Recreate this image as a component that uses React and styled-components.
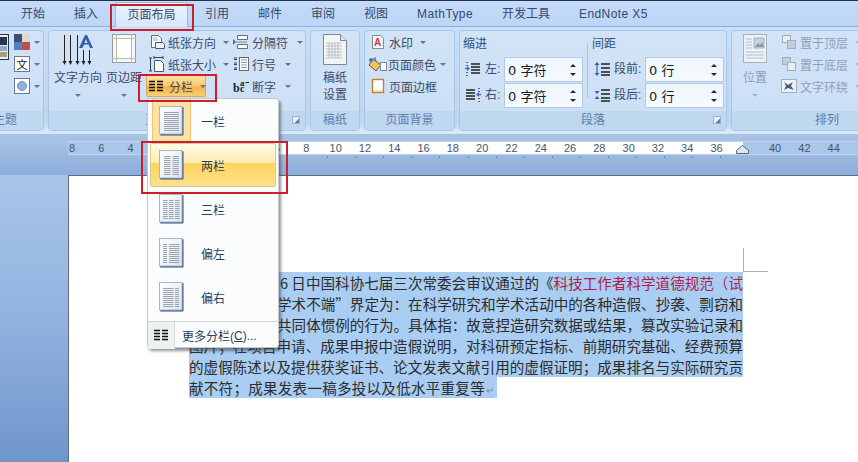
import React from "react";
import styled, { createGlobalStyle } from "styled-components";

const GlobalStyle = createGlobalStyle`
  html, body {
    margin: 0;
    padding: 0;
    background: #fff;
  }
  body {
    font-family: "Liberation Sans", "Noto Sans CJK SC", sans-serif;
    font-size: 12px;
  }
`;

const Window = styled.div`
  position: relative;
  width: 858px;
  height: 462px;
  overflow: hidden;
  display: flex;
  flex-direction: column;
  color: #3a4c66;
`;

/* tabs */
const TabBar = styled.div`
  flex: none;
  height: 27px;
  box-sizing: border-box;
  padding-left: 6.5px;
  display: flex;
  align-items: flex-end;
  background: linear-gradient(#24344a 0, #24344a 1px, #c3dafa 1px, #bdd6f6 100%);
  border-bottom: 1px solid #8fb2dc;
`;
const Tab = styled.div`
  height: ${(p) => (p.$active ? "25px" : "24px")};
  box-sizing: border-box;
  padding: 0 14.5px;
  margin: 0 ${(p) => (p.$active ? "2.5px" : "0")} ${(p) => (p.$active ? "-1px" : "0")};
  line-height: ${(p) => (p.$active ? "25px" : "24px")};
  font-size: 12px;
  letter-spacing: ${(p) => (p.$latin ? "0.4px" : "0")};
  white-space: nowrap;
  color: #35496a;
  border-radius: 3px 3px 0 0;
  ${(p) =>
    p.$active &&
    `
    background: linear-gradient(#eaf3fd, #d6e6f9);
    border: 1px solid #9dbcdc;
    border-bottom: none;
    padding: 0 11.5px;
  `}
`;

/* ribbon */
const Ribbon = styled.div`
  flex: none;
  height: 107px;
  box-sizing: border-box;
  padding: 3px 0 0;
  margin-left: -16px;
  display: flex;
  gap: 4px;
  background: linear-gradient(#c9def6, #bed5f0 90%, #d6e8f8 97%);
`;
const Group = styled.div`
  flex: none;
  width: ${(p) => p.$w}px;
  height: 101px;
  box-sizing: border-box;
  display: flex;
  flex-direction: column;
  border: 1px solid #aac6e6;
  border-radius: 4px;
  background: linear-gradient(#d2e3f7, #cfe1f6 50%, #cadff5);
  overflow: hidden;
`;
const GroupBody = styled.div`
  flex: 1;
  display: flex;
  padding-left: ${(p) => p.$pad || 0}px;
  min-height: 0;
`;
const GroupFooter = styled.div`
  position: relative;
  flex: none;
  height: 19px;
  box-sizing: border-box;
  padding-right: ${(p) => p.$shift || 0}px;
  background: #c0d7f0;
  color: #5d7ea8;
  font-size: 12px;
  line-height: 19px;
  text-align: center;
  white-space: nowrap;
`;
const Launcher = styled.span`
  position: absolute;
  right: 5px;
  top: 5px;
  width: 6px;
  height: 6px;
  border: 1px solid #9ab2cf;
  background: linear-gradient(135deg, #e9f1fa 62%, #5f7fa8 62%);
`;
const Column = styled.div`
  flex: none;
  width: ${(p) => p.$w}px;
  display: flex;
  flex-direction: column;
`;
const MenuButton = styled.div`
  height: 22px;
  box-sizing: border-box;
  display: flex;
  align-items: center;
  gap: ${(p) => p.$gap ?? 3}px;
  padding: 0 3px 0 ${(p) => p.$left ?? 3}px;
  white-space: nowrap;
  color: ${(p) => (p.$dim ? "#8d9fb6" : "inherit")};
  ${(p) =>
    p.$active &&
    `
    width: 60px;
    border: 1px solid #d9a95a;
    border-radius: 2px;
    padding: 0 2px;
    background: linear-gradient(#fde3a3, #fbc766 50%, #f8b048 55%, #fbcf73);
  `}
`;
const Caret = styled.i`
  flex: none;
  width: 0;
  height: 0;
  margin-left: ${(p) => p.$gap || 4}px;
  border: 3px solid transparent;
  border-bottom: none;
  border-top: 3px solid ${(p) => (p.$dim ? "#a6b6c9" : "#5b7699")};
`;
const LargeButton = styled.div`
  flex: none;
  width: ${(p) => p.$w}px;
  display: flex;
  flex-direction: column;
  align-items: center;
  color: ${(p) => (p.$dim ? "#8d9fb6" : "inherit")};
`;
const LargeIcon = styled.div`
  height: 39px;
  display: flex;
  align-items: flex-start;
  justify-content: center;
  padding-top: 3px;
  box-sizing: border-box;
`;
const LargeLabel = styled.div`
  line-height: 17px;
  white-space: nowrap;
  text-align: center;
`;
const CaretRow = styled.div`
  height: 17px;
  display: flex;
  align-items: center;

  ${Caret} {
    margin-left: 0;
  }
`;
const ButtonText = styled.span`
  margin-left: 3px;
`;

/* indent and spacing fields */
const FieldSection = styled.div`
  flex: none;
  width: ${(p) => p.$w}px;
  display: flex;
  flex-direction: column;
`;
const SectionTitle = styled.div`
  height: 26px;
  box-sizing: border-box;
  padding: 5px 0 0 ${(p) => p.$left ?? 3}px;
  line-height: 17px;
  color: #2f4f7e;
`;
const FieldRow = styled.div`
  height: 26px;
  display: flex;
  align-items: flex-start;
`;
const FieldIcon = styled.div`
  flex: none;
  width: 16px;
  margin: 4px 4px 0 ${(p) => p.$left}px;
  height: 16px;
`;
const FieldLabel = styled.div`
  flex: none;
  width: ${(p) => p.$w}px;
  line-height: 25px;
  white-space: nowrap;
`;
const SpinInput = styled.div`
  flex: none;
  width: 79px;
  height: 25px;
  box-sizing: border-box;
  display: flex;
  align-items: center;
  justify-content: space-between;
  padding: 0 6px 0 3px;
  border: 1px solid #b1c9e5;
  background: linear-gradient(#eef5fc, #f6fafe);
  color: #1a1a1a;
  font-size: 13px;
  font-family: "DejaVu Sans", "Noto Sans CJK SC", sans-serif;
  white-space: nowrap;
`;
const SpinArrows = styled.div`
  display: flex;
  flex-direction: column;
  gap: 6px;
`;
const SpinArrow = styled.i`
  width: 0;
  height: 0;
  border: 3px solid transparent;
  ${(p) => (p.$up ? "border-top: none; border-bottom: 3px solid #1f2d44;" : "border-bottom: none; border-top: 3px solid #1f2d44;")}
`;
const FieldDivider = styled.div`
  flex: none;
  width: 1px;
  height: 55px;
  margin: 12px 4px 0 0;
  background: #a9c4e3;
`;

/* ruler */
const RulerBand = styled.div`
  flex: none;
  height: 41px;
  box-sizing: border-box;
  padding: 7px 0 0 68px;
  background: linear-gradient(#a8c3e6, #a3bfe3 30%, #8cacdb 100%);
`;
const RulerTrack = styled.div`
  height: 12px;
  display: flex;
  overflow: hidden;
  border-top: 1px solid #bfd5ee;
  border-bottom: 1px solid #bfd5ee;
  background: linear-gradient(90deg, #aac6e8 0 121px, #fff 121px 675px, #aac6e8 675px);
`;
const RulerNumber = styled.span`
  flex: none;
  width: 29.3px;
  text-align: center;
  font-size: 11px;
  line-height: 12px;
  color: #47566b;
  &:first-child {
    margin-left: -10.65px;
  }
`;
const RulerTicks = styled.div`
  width: 440px;
  height: 2px;
  margin: 1px 0 0 232px;
  background: repeating-linear-gradient(90deg, transparent 0 27.1px, #6f8cb3 27.1px 28.1px);
`;
const RulerStop = styled.svg`
  position: absolute;
  left: 736px;
  top: 145px;
  width: 13px;
  height: 9px;
`;

/* document */
const Workspace = styled.div`
  flex: 1;
  display: flex;
  padding-left: 68px;
  background: linear-gradient(#a9c6ea, #8fb0de 55%, #6f95cb);
`;
const Page = styled.div`
  flex: 1;
  box-sizing: border-box;
  background: #fff;
  border-left: 1px solid #5f6b7a;
  border-top: 1px solid #5f6b7a;
  padding: 96px 0 0 120px;
`;
const TextBlock = styled.div`
  position: relative;
  width: 554px;
  font-family: "Noto Sans CJK SC", sans-serif;
  font-size: 14.55px;
  line-height: 21px;
  color: #2c2c2c;

  &::after {
    content: "";
    position: absolute;
    left: 100%;
    top: -24px;
    width: 24px;
    height: 23px;
    border-left: 1px solid #b0b0b0;
    border-bottom: 1px solid #b0b0b0;
  }
`;
const Line = styled.div`
  height: 21px;
  box-sizing: border-box;
  padding-left: ${(p) => p.$indent || 0}px;
  background: #a9cdf3;
  white-space: nowrap;
  text-align: justify;
  text-align-last: justify;
`;
const LastLine = styled.div`
  height: 21px;
  width: 308px;
  background: #a9cdf3;
  white-space: nowrap;
  letter-spacing: 0.25px;
`;
const RedText = styled.span`
  color: #ab1f4c;
`;
const ParagraphMark = styled.span`
  color: #7f8da0;
  font-size: 10px;
  margin-left: 1px;
`;

/* columns dropdown */
const Dropdown = styled.div`
  position: absolute;
  left: 147px;
  top: 98px;
  width: 132px;
  height: 250px;
  box-sizing: border-box;
  padding: 0 2px;
  display: flex;
  flex-direction: column;
  background: #fbfcfd;
  border: 1px solid #c5c8cc;
  border-radius: 3px;
  box-shadow: 2px 3px 3px rgba(60, 60, 60, 0.55);
`;
const DropdownItem = styled.div`
  flex: none;
  height: 44px;
  box-sizing: border-box;
  display: flex;
  align-items: center;
  ${(p) =>
    p.$hover &&
    `
    border: 1px solid #d8c98f;
    border-radius: 2px;
    background: linear-gradient(#fffbe4, #ffedb0 45%, #ffd35f 46%, #ffe18c);
  `}
`;
const IconCell = styled.div`
  flex: none;
  width: 39px;
  height: 100%;
  margin-left: ${(p) => (p.$hover ? "1px" : "2px")};
  margin-right: 10px;
  box-sizing: border-box;
  display: flex;
  align-items: center;
  justify-content: center;
  ${(p) =>
    p.$selected &&
    `
    background: #fde2a6;
    border: 1px solid #f2c173;
    border-top: none;
  `}
`;
const ItemLabel = styled.span`
  color: #2b3d58;
  font-size: 12px;
`;
const MoreItem = styled.div`
  flex: none;
  height: 27px;
  margin: 2px -2px 0;
  border-top: 1px solid #cfd2d6;
  display: flex;
  align-items: center;
  color: #2b3d58;
`;
const MoreIconCell = styled.div`
  flex: none;
  width: 26px;
  height: 100%;
  display: flex;
  align-items: center;
  justify-content: center;
  background: #eef1f2;
  border-right: 1px solid #d5d8dc;
  margin-right: 7px;
`;
const Underlined = styled.span`
  text-decoration: underline;
`;

const Callout = styled.div`
  position: absolute;
  left: ${(p) => p.$x}px;
  top: ${(p) => p.$y}px;
  width: ${(p) => p.$w}px;
  height: ${(p) => p.$h}px;
  box-sizing: border-box;
  border: 2px solid #cb1f2d;
  pointer-events: none;
`;

/* ribbon drawings */
const Icon = ({ w = 16, h = 16, children }) => (
  <svg width={w} height={h} viewBox={`0 0 ${w} ${h}`} style={{ flex: "none", display: "block" }}>
    {children}
  </svg>
);

const TextDirectionIcon = () => {
  const shaft = (x, y1) => (
    <g key={x} stroke="#222" fill="#222">
      <line x1={x} y1={y1} x2={x} y2={28} strokeWidth="1" />
      <path d={`M${x - 2} 27h4l-2 4z`} stroke="none" />
    </g>
  );
  return (
    <Icon w={34} h={32}>
      {shaft(3.5, 1)}
      {shaft(9.5, 1)}
      {shaft(16.5, 1)}
      {shaft(22.5, 16)}
      {shaft(28.5, 16)}
      <path d="M18 14L24 1h2l6 13h-3l-1.4-3.4h-4.4L21.2 14zM23.4 9h3.2L25 5z" fill="#2f5fa8" />
    </Icon>
  );
};

const MarginsIcon = () => (
  <Icon w={25} h={30}>
    <rect x=".5" y=".5" width="23" height="28" fill="#f4f6f8" stroke="#8d9aa8" />
    <rect x="4.5" y="4.5" width="15" height="20" fill="#fff" stroke="#c2c8a8" />
    <path d="M0 4.5h24M0 24.5h24M4.5 0v29M19.5 0v29" stroke="#b9bfa0" fill="none" />
  </Icon>
);

const OrientationIcon = () => (
  <Icon>
    <path d="M2.5 1.5h7l3 3v9h-10z" fill="#fff" stroke="#5f6e80" />
    <path d="M6.5 8.5h7l2 2v4h-9z" fill="#eef2f6" stroke="#4a5868" />
    <path d="M4 4h4M4 6h5" stroke="#9aa6b4" />
  </Icon>
);
const SizeIcon = () => (
  <Icon>
    <path d="M5.5 4.5h6l3 3v8h-9z" fill="#fff" stroke="#4a5868" />
    <path d="M1.5 2v13M0 2h3M0 15h3M5 1.5h9M5 0v3M14 0v3" stroke="#33445e" fill="none" />
  </Icon>
);
const BreaksIcon = () => (
  <Icon>
    <path d="M4.5 1.5h10v4h-10zM4.5 10.5h10v4h-10z" fill="#fff" stroke="#5f6e80" />
    <path d="M3 8h11" stroke="#7d8a99" />
    <path d="M0 5l3 3-3 3z" fill="#3f6cb0" />
  </Icon>
);
const LineNumbersIcon = () => (
  <Icon>
    <rect x="6.5" y="1.5" width="9" height="13" fill="#fff" stroke="#5f6e80" />
    <path d="M8 4h6M8 6.5h6M8 9h6M8 11.5h6" stroke="#8a97a6" />
    <path d="M1 2h3M1 3.5h3M1 7h3M1 8.5h3M1 12h3M1 13.5h3" stroke="#33445e" />
  </Icon>
);
const HyphenIcon = () => (
  <Icon>
    <text x="0" y="14" fontSize="12" fontWeight="700" fill="#222" fontFamily="Liberation Serif, serif">b</text>
    <text x="7" y="14" fontSize="10" fontWeight="700" fill="#222" fontFamily="Liberation Serif, serif">c</text>
    <text x="7" y="8" fontSize="9" fontWeight="700" fill="#222" fontFamily="Liberation Serif, serif">a</text>
    <path d="M12.5 4.5h3.5" stroke="#222" />
  </Icon>
);
const ColumnsGlyph = () => (
  <Icon w={14} h={13}>
    <path d="M0 1.5h6M8 1.5h6M0 4.5h6M8 4.5h6M0 7.5h6M8 7.5h6M0 10.5h6M8 10.5h6" stroke="#111" strokeWidth="1.6" />
  </Icon>
);
const WatermarkIcon = () => (
  <Icon>
    <path d="M2.5 1.5h8l3 3v10h-11z" fill="#f6f6f8" stroke="#7d8a99" />
    <text x="4" y="12" fontSize="10" fontWeight="700" fill="#c8404a" fontFamily="Liberation Sans, sans-serif">A</text>
  </Icon>
);
const PageColorIcon = () => (
  <Icon w={20} h={16}>
    <path d="M5 3l8 6-5 6-7-6z" fill="#e9c46a" stroke="#6b5a2c" />
    <path d="M7 1.5l-2 2 3 1z" fill="#fff" stroke="#56657a" />
    <rect x="12.5" y="6.5" width="6" height="8" fill="#fff" stroke="#7d8a99" />
    <circle cx="3" cy="4" r="2" fill="#3d77bd" />
  </Icon>
);
const PageBordersIcon = () => (
  <Icon>
    <rect x="2.5" y="1.5" width="11" height="13" fill="#fff" stroke="#b9842c" strokeWidth="1.4" />
    <path d="M4 12.5h8v1H4z" fill="#e6c37a" />
  </Icon>
);
const CountSheetIcon = () => (
  <Icon w={24} h={31}>
    <path d="M.5 .5h17l6 6v24H.5z" fill="#f3f4f6" stroke="#7d8a99" />
    <path d="M17.5 .5v6h6" fill="#dfe3e8" stroke="#7d8a99" />
    <path d="M3 9h16M3 12h16M3 15h16M3 18h16M3 21h16M3 24h16M6 9v15M9 9v15M12 9v15M15 9v15" stroke="#a7b0bb" strokeWidth=".7" />
  </Icon>
);
const IndentIcon = ({ right }) => (
  <Icon>
    <path d="M6 3h9M6 6h9M6 9h9M6 12h9M2 1v1M2 4v1M2 11v1M2 14v1" stroke="#222" strokeWidth="1.3" transform={right ? "matrix(-1 0 0 1 16 0)" : undefined} />
    <path d="M0 7.5h3" stroke="#3c6fb8" strokeWidth="1.4" transform={right ? "matrix(-1 0 0 1 16 0)" : undefined} />
    <path d={right ? "M11 7.5l3-2.5v5z" : "M5 7.5L2 5v5z"} fill="#3c6fb8" />
  </Icon>
);
const SpacingIcon = ({ after }) => (
  <Icon>
    <path d="M7 3h9M7 7h9M7 11h9M7 14h9" stroke="#222" strokeWidth="1.4" />
    <path d={after ? "M3 7L.5 4h5zM3 9L.5 12h5z" : "M3 1L.5 4h5zM3 15L.5 12h5z"} fill="#2f66b3" />
    {!after && <path d="M3 4v8" stroke="#2f66b3" strokeWidth="1.2" />}
  </Icon>
);
const PositionIcon = () => (
  <Icon w={24} h={29}>
    <rect x=".5" y=".5" width="23" height="28" fill="#eef2f6" stroke="#a4b1c0" />
    <path d="M3 5h6M3 8h6M3 11h6M3 14h6M3 18h18M3 21h18M3 24h18" stroke="#b5bec9" />
    <rect x="11" y="4" width="10" height="10" fill="#c8d2dd" stroke="#a4b1c0" />
    <path d="M12 13l3-4 2 2 2-3 2 5z" fill="#8a98a9" />
  </Icon>
);
const LayerIcon = ({ back }) => (
  <Icon>
    <rect x="1.5" y="1.5" width="8" height="7" fill={back ? "#c2cdd9" : "#e8edf2"} stroke="#a0aebc" />
    <rect x="6.5" y="6.5" width="8" height="8" fill={back ? "#e8edf2" : "#c2cdd9"} stroke="#a0aebc" />
  </Icon>
);
const WrapIcon = () => (
  <Icon>
    <rect x=".5" y="1.5" width="15" height="13" fill="#eef2f6" stroke="#a0aebc" />
    <path d="M3 4l4 3 5-3-2 4 3 4-6-2-4 2 2-4z" fill="#4a5f77" />
  </Icon>
);
const ThemeColorsIcon = () => (
  <Icon>
    <rect x="0" y="0" width="8" height="8" fill="#3b4e74" />
    <rect x="8" y="0" width="8" height="8" fill="#e4d7c7" />
    <rect x="0" y="8" width="8" height="8" fill="#4f81bd" />
    <rect x="8" y="8" width="8" height="8" fill="#c0504d" />
  </Icon>
);
const ThemeFontsIcon = () => (
  <Icon>
    <rect x=".5" y=".5" width="15" height="15" fill="#fff" stroke="#6a7a8c" />
    <text x="2.5" y="12.5" fontSize="11" fill="#111" fontFamily="Noto Sans CJK SC, sans-serif">文</text>
  </Icon>
);
const ThemeEffectsIcon = () => (
  <Icon>
    <rect x=".5" y=".5" width="15" height="15" fill="#fff" stroke="#6a7a8c" />
    <circle cx="8" cy="8" r="4.5" fill="#8fb0dc" stroke="#6a8dbd" />
  </Icon>
);
const ThemesIcon = () => (
  <Icon w={24} h={26}>
    <rect x=".5" y=".5" width="23" height="25" fill="#e8eef6" stroke="#27364c" />
    <rect x="15" y="3" width="7" height="8" fill="#27364c" />
    <rect x="15" y="12" width="7" height="5" fill="#8ea7c9" />
    <rect x="15" y="18" width="7" height="5" fill="#b09a7c" />
  </Icon>
);

/* page thumbnails for the column presets */
const columnLayouts = {
  one: [[5, 15]],
  two: [[5, 6.5], [13.5, 6.5]],
  three: [[4, 4.6], [10, 4.6], [16, 4.6]],
  left: [[4, 4], [10, 10.5]],
  right: [[4, 10.5], [16, 4]],
};

const ColumnPageIcon = ({ layout }) => {
  const rows = [6, 8, 10, 12, 14, 16, 18, 20, 22, 24];
  return (
    <Icon w={25} h={30}>
      <defs>
        <linearGradient id={`sheet-${layout}`} x1="0" y1="0" x2="1" y2="1">
          <stop offset="0" stopColor="#fff" />
          <stop offset="1" stopColor="#dbe5f1" />
        </linearGradient>
      </defs>
      <rect x="1" y="1" width="23.5" height="28.5" rx="1" fill="#2f4f80" />
      <rect x=".5" y=".5" width="22.5" height="27.5" fill={`url(#sheet-${layout})`} stroke="#aab6c4" />
      {columnLayouts[layout].map(([x, width]) =>
        rows.map((y) => <rect key={`${x}-${y}`} x={x} y={y} width={width} height="1" fill="#9aa3ae" />)
      )}
    </Icon>
  );
};

const tabs = [
  { label: "开始" },
  { label: "插入" },
  { label: "页面布局", active: true },
  { label: "引用" },
  { label: "邮件" },
  { label: "审阅" },
  { label: "视图" },
  { label: "MathType", latin: true },
  { label: "开发工具" },
  { label: "EndNote X5", latin: true },
];

const rulerMarks = [
  8, 6, 4, 2, "", 2, 4, 6, 8, 10, 12, 14, 16, 18, 20, 22, 24, 26, 28, 30, 32, 34, 36, "", 40, 42, 44,
];

const columnPresets = [
  { label: "一栏", layout: "one", selected: true },
  { label: "两栏", layout: "two", hover: true },
  { label: "三栏", layout: "three" },
  { label: "偏左", layout: "left" },
  { label: "偏右", layout: "right" },
];

const SpinField = ({ value }) => (
  <SpinInput>
    {value}
    <SpinArrows>
      <SpinArrow $up />
      <SpinArrow />
    </SpinArrows>
  </SpinInput>
);

const App = () => {
  return (
    <Window lang="zh-CN">
      <GlobalStyle />
      <TabBar>
        {tabs.map((tab) => (
          <Tab key={tab.label} $active={tab.active} $latin={tab.latin}>
            {tab.label}
          </Tab>
        ))}
      </TabBar>

      <Ribbon>
        <Group $w={60}>
          <GroupBody>
            <Column $w={23}>
              <LargeIcon>
                <ThemesIcon />
              </LargeIcon>
            </Column>
            <Column $w={34}>
              <MenuButton $gap={0} $left={6}>
                <ThemeColorsIcon />
                <Caret />
              </MenuButton>
              <MenuButton $gap={0} $left={6}>
                <ThemeFontsIcon />
                <Caret />
              </MenuButton>
              <MenuButton $gap={0} $left={6}>
                <ThemeEffectsIcon />
                <Caret />
              </MenuButton>
            </Column>
          </GroupBody>
          <GroupFooter $shift={18}>主题</GroupFooter>
        </Group>

        <Group $w={258}>
          <GroupBody $pad={5}>
            <LargeButton $w={48}>
              <LargeIcon>
                <TextDirectionIcon />
              </LargeIcon>
              <LargeLabel>文字方向</LargeLabel>
              <CaretRow>
                <Caret />
              </CaretRow>
            </LargeButton>
            <LargeButton $w={44}>
              <LargeIcon>
                <MarginsIcon />
              </LargeIcon>
              <LargeLabel>页边距</LargeLabel>
              <CaretRow>
                <Caret />
              </CaretRow>
            </LargeButton>
            <Column $w={84}>
              <MenuButton>
                <OrientationIcon />
                纸张方向
                <Caret />
              </MenuButton>
              <MenuButton>
                <SizeIcon />
                纸张大小
                <Caret />
              </MenuButton>
              <MenuButton $active>
                <ColumnsGlyph />
                <ButtonText>分栏</ButtonText>
                <Caret />
              </MenuButton>
            </Column>
            <Column $w={76}>
              <MenuButton>
                <BreaksIcon />
                分隔符
                <Caret $gap={6} />
              </MenuButton>
              <MenuButton>
                <LineNumbersIcon />
                行号
                <Caret $gap={6} />
              </MenuButton>
              <MenuButton>
                <HyphenIcon />
                断字
                <Caret $gap={6} />
              </MenuButton>
            </Column>
          </GroupBody>
          <GroupFooter $shift={16}>
            页面设置
            <Launcher />
          </GroupFooter>
        </Group>

        <Group $w={50}>
          <GroupBody>
            <LargeButton $w={48}>
              <LargeIcon>
                <CountSheetIcon />
              </LargeIcon>
              <LargeLabel>
                稿纸
                <br />
                设置
              </LargeLabel>
            </LargeButton>
          </GroupBody>
          <GroupFooter>稿纸</GroupFooter>
        </Group>

        <Group $w={91}>
          <GroupBody $pad={2}>
            <Column $w={86}>
              <MenuButton>
                <WatermarkIcon />
                水印
                <Caret />
              </MenuButton>
              <MenuButton $gap={0} $left={1}>
                <PageColorIcon />
                页面颜色
                <Caret />
              </MenuButton>
              <MenuButton>
                <PageBordersIcon />
                页面边框
              </MenuButton>
            </Column>
          </GroupBody>
          <GroupFooter>页面背景</GroupFooter>
        </Group>

        <Group $w={268}>
          <GroupBody>
            <FieldSection $w={127}>
              <SectionTitle>缩进</SectionTitle>
              <FieldRow>
                <FieldIcon $left={5}>
                  <IndentIcon />
                </FieldIcon>
                <FieldLabel $w={19}>左:</FieldLabel>
                <SpinField value="0 字符" />
              </FieldRow>
              <FieldRow>
                <FieldIcon $left={5}>
                  <IndentIcon right />
                </FieldIcon>
                <FieldLabel $w={19}>右:</FieldLabel>
                <SpinField value="0 字符" />
              </FieldRow>
            </FieldSection>
            <FieldDivider />
            <FieldSection $w={130}>
              <SectionTitle $left={0}>间距</SectionTitle>
              <FieldRow>
                <FieldIcon $left={2}>
                  <SpacingIcon />
                </FieldIcon>
                <FieldLabel $w={31}>段前:</FieldLabel>
                <SpinField value="0 行" />
              </FieldRow>
              <FieldRow>
                <FieldIcon $left={2}>
                  <SpacingIcon after />
                </FieldIcon>
                <FieldLabel $w={31}>段后:</FieldLabel>
                <SpinField value="0 行" />
              </FieldRow>
            </FieldSection>
          </GroupBody>
          <GroupFooter>
            段落
            <Launcher />
          </GroupFooter>
        </Group>

        <Group $w={192}>
          <GroupBody>
            <LargeButton $w={46} $dim>
              <LargeIcon>
                <PositionIcon />
              </LargeIcon>
              <LargeLabel>位置</LargeLabel>
              <CaretRow>
                <Caret $dim />
              </CaretRow>
            </LargeButton>
            <Column $w={100}>
              <MenuButton $dim>
                <LayerIcon />
                置于顶层
                <Caret $dim />
              </MenuButton>
              <MenuButton $dim>
                <LayerIcon back />
                置于底层
                <Caret $dim />
              </MenuButton>
              <MenuButton $dim>
                <WrapIcon />
                文字环绕
                <Caret $dim />
              </MenuButton>
            </Column>
          </GroupBody>
          <GroupFooter>排列</GroupFooter>
        </Group>
      </Ribbon>

      <RulerBand>
        <RulerTrack>
          {rulerMarks.map((mark, i) => (
            <RulerNumber key={i}>{mark}</RulerNumber>
          ))}
        </RulerTrack>
        <RulerTicks />
      </RulerBand>
      <RulerStop viewBox="0 0 13 9">
        <path d="M.5 8.5v-3L6.5 .5l6 5v3z" fill="#dfe8f3" stroke="#56657a" />
      </RulerStop>

      <Workspace>
        <Page>
          <TextBlock>
            <Line $indent={91}>
              6 日中国科协七届三次常委会审议通过的《<RedText>科技工作者科学道德规范（试</RedText>
            </Line>
            <Line $indent={88}>学术不端”界定为：在科学研究和学术活动中的各种造假、抄袭、剽窃和</Line>
            <Line $indent={88}>共同体惯例的行为。具体指：故意捏造研究数据或结果，篡改实验记录和</Line>
            <Line>图片；在项目申请、成果申报中造假说明，对科研预定指标、前期研究基础、经费预算</Line>
            <Line>的虚假陈述以及提供获奖证书、论文发表文献引用的虚假证明；成果排名与实际研究贡</Line>
            <LastLine>
              献不符；成果发表一稿多投以及低水平重复等
              <ParagraphMark>↵</ParagraphMark>
            </LastLine>
          </TextBlock>
        </Page>
      </Workspace>

      <Dropdown>
        {columnPresets.map((preset) => (
          <DropdownItem key={preset.label} $hover={preset.hover}>
            <IconCell $selected={preset.selected} $hover={preset.hover}>
              <ColumnPageIcon layout={preset.layout} />
            </IconCell>
            <ItemLabel>{preset.label}</ItemLabel>
          </DropdownItem>
        ))}
        <MoreItem>
          <MoreIconCell>
            <ColumnsGlyph />
          </MoreIconCell>
          更多分栏(<Underlined>C</Underlined>)...
        </MoreItem>
      </Dropdown>

      <Callout $x={110} $y={4} $w={84} $h={27} />
      <Callout $x={138} $y={74} $w={79} $h={28} />
      <Callout $x={141} $y={141} $w={147} $h={53} />
    </Window>
  );
};

export default App;
